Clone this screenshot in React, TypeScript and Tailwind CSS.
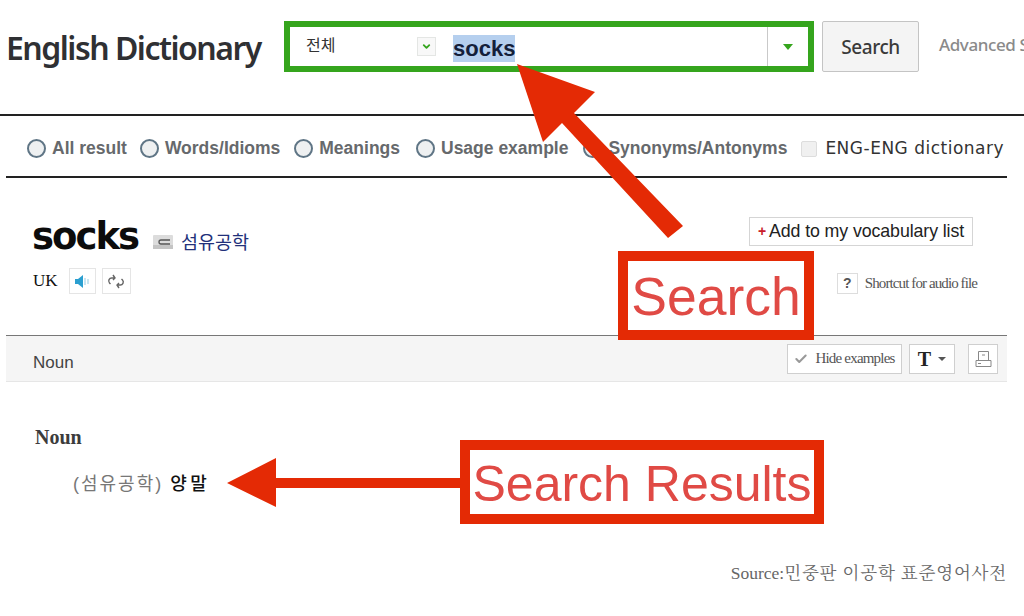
import { Check, ChevronDown } from "lucide-react";

const sans = "font-['Liberation_Sans','Noto_Sans_CJK_KR',sans-serif]";
const serif = "font-['Liberation_Serif','Noto_Serif_CJK_KR','Noto_Sans_CJK_KR',serif]";

const scopes = [
  { label: "All result", gap: "mr-[13px]" },
  { label: "Words/Idioms", gap: "mr-[14px]" },
  { label: "Meanings", gap: "mr-[16px]" },
  { label: "Usage example", gap: "mr-[15px]" },
  { label: "Synonyms/Antonyms", gap: "mr-[14px]" },
];

function Radio() {
  return (
    <span className="mr-[6px] h-[19px] w-[19px] shrink-0 rounded-full border-2 border-[#5f7585] bg-[#eef0f1]" />
  );
}

function SearchBar() {
  return (
    <div className="flex h-[51px] w-[530px] shrink-0 items-center border-[6px] border-[#35a51d] bg-white">
      <span className={`ml-[16px] w-[111px] pb-[1px] text-[16px] text-[#333] ${sans}`}>전체</span>
      <span className="flex h-[19px] w-[19px] items-center justify-center border border-[#e4e6e4] bg-[#f8f8f8]">
        <ChevronDown size={11} strokeWidth={4} className="text-[#35a51d]" />
      </span>
      <span className={`mt-[3px] ml-[17px] bg-[#b5cfee] text-[22px] leading-[27px] font-bold text-[#14203a] ${sans}`}>socks</span>
      <span className="flex-1" />
      <span className="flex h-full w-[41px] items-center justify-center border-l border-[#c9c9c9]">
        <span className="h-0 w-0 border-x-[5px] border-t-[6px] border-x-transparent border-t-[#35a51d]" />
      </span>
    </div>
  );
}

function Header() {
  return (
    <div className="flex h-[116px] overflow-hidden border-b-2 border-[#222] pt-[21px] pl-[6px] whitespace-nowrap">
      <h1 className="mt-[4px] w-[278px] shrink-0 font-['Noto_Sans',sans-serif] text-[32px] leading-[46px] font-semibold tracking-[-1.5px] text-[#2f3033]">
        English Dictionary
      </h1>
      <SearchBar />
      <button className="ml-[8px] h-[51px] w-[97px] shrink-0 rounded-[2px] border border-[#c4c4c4] bg-[#f4f4f4] pt-[1px] font-['Noto_Sans',sans-serif] text-[19px] font-medium tracking-[-0.4px] text-[#3a3a3a]">
        Search
      </button>
      <span className="mt-[11px] ml-[20px] shrink-0 font-['Noto_Sans',sans-serif] text-[17px] font-medium tracking-[-0.4px] text-[#8a8a8a]">
        Advanced Search
      </span>
    </div>
  );
}

function ScopeRow() {
  return (
    <div className="mr-[17px] ml-[6px] flex h-[62px] items-center border-b-2 border-[#222] pt-[5px] pl-[21px] whitespace-nowrap">
      {scopes.map((s) => (
        <label key={s.label} className={`flex items-center ${s.gap} ${sans} text-[17.500px] font-bold text-[#66696c]`}>
          <Radio />
          {s.label}
        </label>
      ))}
      <span className="mr-[8px] h-[16px] w-[16px] rounded-[2px] border border-[#ddd] bg-[#f0f0f0]" />
      <span className="font-['DejaVu_Sans',sans-serif] text-[17px] tracking-[0.5px] text-[#333]">ENG-ENG dictionary</span>
    </div>
  );
}

function Entry() {
  return (
    <div className="mr-[17px] ml-[6px] flex h-[157px] justify-between pt-[38px] pr-[34px] pl-[26px]">
      <div>
        <div className="flex items-center">
          <span className="font-['DejaVu_Sans',sans-serif] text-[37px] leading-[42px] font-bold tracking-[-2px] text-[#0c0c0c]">socks</span>
          <svg width="20" height="14" viewBox="0 0 20 14" className="mt-[10px] ml-[15px]">
            <rect x="0" y="0" width="20" height="14" rx="1" fill="#dcdcdc" />
            <rect x="0" y="10" width="20" height="4" fill="#c4c4c4" />
            <path d="M17 5H8a2 2 0 0 0 0 4h9" fill="none" stroke="#555" strokeWidth="1.3" />
          </svg>
          <span className={`mt-[12px] ml-[8px] text-[18.500px] text-[#22307a] ${sans}`}>섬유공학</span>
        </div>
        <div className="mt-[10px] ml-[1px] flex items-center">
          <span className={`text-[17px] text-[#111] ${serif}`}>UK</span>
          <span className="ml-[11px] flex h-[26px] w-[27px] items-center justify-center border border-[#e5e5e5]">
            <svg width="15" height="13" viewBox="0 0 15 13">
              <path d="M0 4h3l5-4v13L3 9H0z" fill="#2b9fd0" />
              <path d="M10 3v7M13 4v5" stroke="#a5d4e8" strokeWidth="1.2" />
            </svg>
          </span>
          <span className="ml-[6px] flex h-[26px] w-[29px] items-center justify-center border border-[#e5e5e5]">
            <svg width="18" height="15" viewBox="0 0 18 15" fill="none" stroke="#666" strokeWidth="1.4">
              <path d="M8 4H5a3 3 0 0 0-2.500 5l1 1M6 1l2 3-2 2" />
              <path d="M10 11h3a3 3 0 0 0 2.500-5l-1-1M12 14l-2-3 2-2" />
            </svg>
          </span>
        </div>
      </div>
      <div className="mt-[1px] flex flex-col items-end">
        <button className="flex h-[29px] w-[224px] items-center justify-center border border-[#d5d5d5] bg-white font-['Liberation_Sans',sans-serif] text-[17.800px] tracking-[-0.1px] text-[#222]">
          <span className="mr-[3px] text-[14px] font-bold text-[#c8202a]">+</span>
          Add to my vocabulary list
        </button>
        <div className="mt-[26px] mr-[-4px] flex items-center">
          <span className={`flex h-[21px] w-[21px] items-center justify-center border border-[#ddd] text-[14px] font-bold text-[#555] ${sans}`}>?</span>
          <span className={`ml-[7px] text-[15px] tracking-[-0.9px] text-[#555] ${serif}`}>Shortcut for audio file</span>
        </div>
      </div>
    </div>
  );
}

function NounBar() {
  return (
    <div className="mr-[17px] ml-[6px] flex h-[47px] items-center justify-between border-t border-b border-t-[#777] border-b-[#e6e6e6] bg-[#f5f5f5] pr-[9px] pl-[27px]">
      <span className={`pt-[9px] text-[17px] text-[#444] ${sans}`}>Noun</span>
      <div className="flex items-center">
        <button className={`flex h-[30px] w-[115px] items-center justify-center border border-[#cfcfcf] bg-white text-[15px] tracking-[-0.8px] text-[#555] ${serif}`}>
          <Check size={14} strokeWidth={3.5} className="mr-[7px] text-[#999]" />
          Hide examples
        </button>
        <button className={`ml-[7px] flex h-[30px] w-[46px] items-center justify-center border border-[#cfcfcf] bg-white text-[20px] font-bold text-[#222] ${serif}`}>
          T
          <span className="ml-[7px] h-0 w-0 border-x-[4px] border-t-[4px] border-x-transparent border-t-[#555]" />
        </button>
        <button className="ml-[13px] flex h-[30px] w-[30px] items-center justify-center border border-[#cfcfcf] bg-white">
          <svg width="17" height="18" viewBox="0 0 17 18" fill="none" stroke="#888">
            <path d="M3.500 10V1.500h10V10M1 10.500h15v6H1z" />
            <path d="M7 5h3M3 13.500h3" />
          </svg>
        </button>
      </div>
    </div>
  );
}

function Result() {
  return (
    <div className="pt-[43px] pl-[35px]">
      <h2 className={`text-[20px] leading-[24px] font-bold text-[#3c3c3c] ${serif}`}>Noun</h2>
      <p className={`mt-[22px] ml-[38px] text-[18px] tracking-[2px] ${sans}`}>
        <span className="text-[#777]">(섬유공학)</span>{" "}
        <span className="font-medium tracking-[3.5px] text-[#111]">양말</span>
      </p>
      <p className={`mt-[62px] mr-[17px] text-right text-[17.500px] text-[#666] ${serif}`}>
        Source:<span className="tracking-[0.8px]">민중판 이공학 표준영어사전</span>
      </p>
    </div>
  );
}

// red annotations drawn on top of the screenshot
function Annotations() {
  return (
    <>
      <svg width="1024" height="616" viewBox="0 0 1024 616" className="absolute top-0 left-0">
        <path d="M517 64L595 92 574 113 683 226 668 238 562 123 543 142Z" fill="#e42a05" />
        <path d="M227 483L276 458V478H470V488H276V507Z" fill="#e42a05" />
      </svg>
      <div className={`absolute top-[251px] left-[618px] flex h-[89px] w-[196px] items-center justify-center border-[10px] border-[#e42a05] bg-white pt-[3px] text-[53.500px] text-[#e04a45] ${sans}`}>
        Search
      </div>
      <div className={`absolute top-[440px] left-[460px] flex h-[84px] w-[364px] items-center justify-center border-[10px] border-[#e42a05] bg-white pt-[4px] text-[50px] whitespace-nowrap text-[#e04a45] ${sans}`}>
        Search Results
      </div>
    </>
  );
}

export default function App() {
  return (
    <div className="relative h-[616px] w-[1024px] overflow-hidden bg-white">
      <Header />
      <ScopeRow />
      <Entry />
      <NounBar />
      <Result />
      <Annotations />
    </div>
  );
}
